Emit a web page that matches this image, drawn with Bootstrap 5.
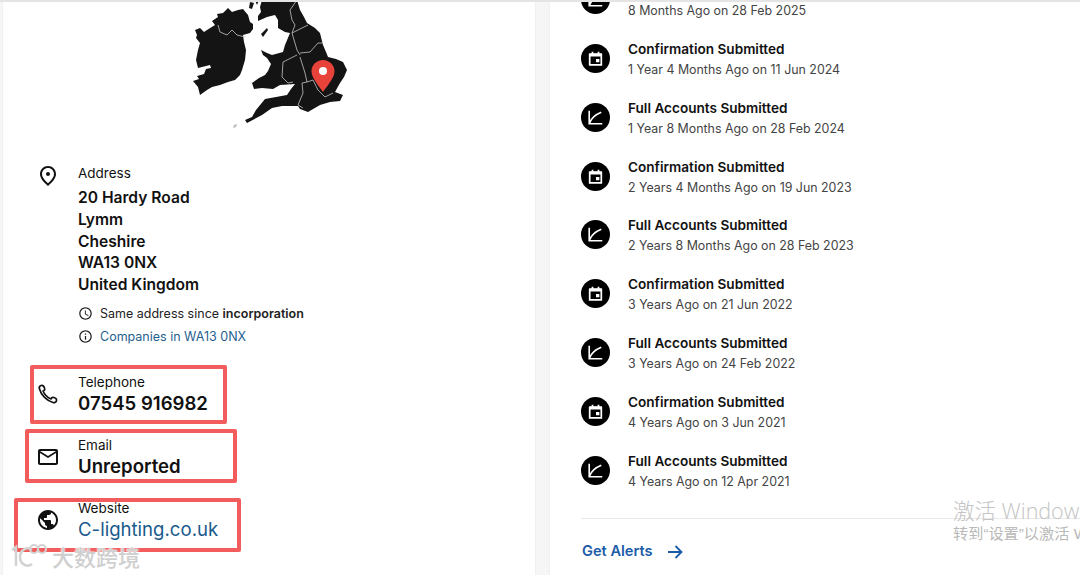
<!DOCTYPE html>
<html lang="en">
<head>
  <meta charset="UTF-8" />
  <meta name="viewport" content="width=device-width, initial-scale=1.0"/>
  <title>Company profile</title>
  <link href="https://cdn.jsdelivr.net/npm/bootstrap@5.3.3/dist/css/bootstrap.min.css" rel="stylesheet">
  <style>
    html, body { height: 575px; overflow: hidden; }
    body {
      background: #f6f6f6;
      font-family: Inter, "Noto Sans CJK SC", sans-serif;
      color: #111;
    }
    .top-shade { height: 2px; background: #e4e4e4; position: relative; z-index: 2; margin-bottom: -2px; }
    .page-wrap { padding-left: 3px; gap: 15px; height: 575px; }
    .pane { background: #fff; overflow: hidden; height: 575px; box-shadow: 0 0 2px rgba(0,0,0,.08); }
    .pane-left { width: 532px; flex: none; position: relative; }
    .pane-right { flex: 1; padding-left: 31px; }

    .uk-map { display: block; width: 180px; height: 135px; margin-left: 177px; filter: blur(.35px); }
    .info-block { padding-left: 33px; }
    .info-row { gap: 18px; }
    .info-icon { width: 24px; height: 24px; flex: none; fill: #111; }
    .info-label { font-size: 13.5px; line-height: 18px; }
    .addr-label { margin-bottom: 5px; }
    .info-value { font-size: 15.6px; font-weight: 600; line-height: 21.8px; }
    .info-big { font-size: 18.6px; font-weight: 600; line-height: 25px; }
    .info-link { font-size: 18.6px; font-weight: 400; line-height: 25px; color: #1a5a8c; text-decoration: none; }
    .info-note { font-size: 12.5px; line-height: 16px; color: #222; gap: 7px; }
    .info-note a { color: #1f5f8f; text-decoration: none; }
    .note-first { margin-top: 10px; }
    .note-second { margin-top: 7px; }
    .note-icon { width: 15px; height: 15px; fill: #222; flex: none; }
    .row-tel { margin-top: 28px; }
    .row-next { margin-top: 20px; }

    .red-box { position: absolute; border: 4px solid #f25c5c; border-radius: 2px; }
    .box-tel { left: 27px; top: 365px; width: 197px; height: 59px; }
    .box-mail { left: 22px; top: 429px; width: 212px; height: 54px; }
    .box-web { left: 11px; top: 498px; width: 227px; height: 54px; }

    .filing-list { margin-top: -28.7px; }
    .filing-row { height: 58.8px; gap: 18px; }
    .filing-dot { width: 29px; height: 29px; border-radius: 50%; background: #000; flex: none; margin-top: -2px; }
    .filing-title { font-size: 13.6px; font-weight: 600; line-height: 20px; }
    .filing-date { font-size: 12.4px; line-height: 20px; color: #444; padding-top: 1px; }
    .filing-rule { margin: 18px 0 19px; border-top: 1px solid #e9e9e9; }
    .alert-link { color: #1a5ca8; font-size: 14.6px; font-weight: 600; text-decoration: none; gap: 13px; margin-left: 1px; }

    .win-mark { position: absolute; left: 953px; top: 497px; color: #c4c4c4; white-space: nowrap; font-family: "Open Sans", "Noto Sans CJK SC", sans-serif; }
    .win-line1 { font-size: 21.5px; line-height: 27px; font-weight: 300; }
    .win-line2 { font-size: 15.2px; line-height: 20px; color: #b9b9b9; font-family: "Liberation Sans", "Noto Sans CJK SC", sans-serif; }
    .site-mark { position: absolute; left: 9px; top: 541px; gap: 3px; }
    .site-mark span { font-family: "Noto Sans CJK SC", sans-serif; font-size: 22px; font-weight: 500; color: #cfcfcf; line-height: 30px;
      text-shadow: 0 0 2px #fff, 0 0 2px #fff; }
  </style>
</head>
<body>
  <svg width="0" height="0" class="position-absolute">
    <symbol id="i-place" viewBox="0 0 24 24"><path d="M12 12c-1.100 0-2-.9-2-2s.9-2 2-2 2 .9 2 2-.9 2-2 2zm6-1.800C18 6.570 15.350 4 12 4s-6 2.570-6 6.200c0 2.340 1.950 5.440 6 9.140 4.050-3.700 6-6.800 6-9.140zM12 2c4.200 0 8 3.220 8 8.200 0 3.320-2.670 7.250-8 11.800-5.330-4.550-8-8.480-8-11.800C4 5.220 7.800 2 12 2z"/></symbol>
    <symbol id="i-clock" viewBox="0 0 24 24"><path d="M11.990 2C6.470 2 2 6.480 2 12s4.470 10 9.990 10C17.520 22 22 17.520 22 12S17.520 2 11.990 2zM12 20c-4.420 0-8-3.580-8-8s3.580-8 8-8 8 3.580 8 8-3.580 8-8 8zm.5-13H11v6l5.250 3.150.75-1.230-4.500-2.670z"/></symbol>
    <symbol id="i-info" viewBox="0 0 24 24"><path d="M11 7h2v2h-2zm0 4h2v6h-2zm1-9C6.480 2 2 6.480 2 12s4.480 10 10 10 10-4.480 10-10S17.520 2 12 2zm0 18c-4.410 0-8-3.590-8-8s3.590-8 8-8 8 3.590 8 8-3.590 8-8 8z"/></symbol>
    <symbol id="i-phone" viewBox="0 0 24 24"><path fill="none" stroke="#111" stroke-width="1.700" stroke-linejoin="round" d="M5 3.500C3.500 4 3 5.500 3.500 7 5 13 11 19 17 20.500c1.500.5 3.500-.5 3.500-2 .3-1.500-1-2.500-2.500-3-1.500-.5-2.500 0-3 1.500C11.500 15.500 8.500 12.500 7 9c1.500-.5 2-1.500 1.500-3C8 4.500 6.800 3 5 3.500z"/></symbol>
    <symbol id="i-mail" viewBox="0 0 24 24"><path d="M22 6c0-1.100-.9-2-2-2H4c-1.100 0-2 .9-2 2v12c0 1.100.9 2 2 2h16c1.100 0 2-.9 2-2V6zm-2 0l-8 5-8-5h16zm0 12H4V8l8 5 8-5v10z"/></symbol>
    <symbol id="i-globe" viewBox="0 0 24 24"><path d="M12 2C6.480 2 2 6.480 2 12s4.480 10 10 10 10-4.480 10-10S17.520 2 12 2zm-1 17.930c-3.950-.49-7-3.850-7-7.930 0-.62.08-1.210.21-1.790L9 15v1c0 1.100.9 2 2 2v1.930zm6.900-2.540c-.26-.81-1-1.390-1.900-1.390h-1v-3c0-.55-.45-1-1-1H8v-2h2c.55 0 1-.45 1-1V7h2c1.100 0 2-.9 2-2v-.41c2.930 1.190 5 4.060 5 7.410 0 2.080-.8 3.970-2.100 5.390z"/></symbol>
    <symbol id="i-cal" viewBox="0 0 30 30"><path fill="none" stroke="#fff" stroke-width="1.800" d="M9 11h12v10.500H9z"/><path fill="#fff" d="M8.500 9.500h13V13h-13zM11 8h1.800v2H11zM17.200 8H19v2h-1.800zM15.500 15.500H19V19h-3.500z"/></symbol>
    <symbol id="i-chart" viewBox="0 0 30 30"><path fill="none" stroke="#fff" stroke-width="1.700" d="M8.500 8v13.500H22M9 20.500c1.500-4.500 4.500-8 12-11"/></symbol>
  </svg>

  <div class="top-shade"></div>

  <div class="d-flex page-wrap">
    <!-- Left card -->
    <div class="pane pane-left">
      <svg class="uk-map" viewBox="180 0 180 135">
        <g fill="#141414">
          <!-- Ireland -->
          <path d="M195 30L200 28L204 32L207 30L215 25L212 21L218 17L217 14L223 13L228 8L232 12L238 10L243 9L248 15L250 22L253 24L253 29L250 33L243 35L244 42L246 50L245 60L242 70L240 75L235 80L228 82L220 85L212 87L207 90L200 95L198 87L193 81L199 79L197 76L204 74L206 69L211 68L210 65L198 68L196 60L198 50L200 43L196 38L197 35Z"/>
          <!-- Great Britain -->
          <path d="M262 0L297 0L300 10L304 17L307 23L315 28L320 33L323 45L326 52L328 57L336 59L343 62L347 70L344 77L340 83L335 92L343 95L340 101L330 102L320 105L308 112L300 109L298 106L282 106L272 108L262 115L247 123L245 120L252 117L256 110L265 99L276 97L287 95L291 89L295 84L280 85L273 89L262 88L254 89L252 83L259 78L265 75L268 71L271 64L267 58L263 55L261 50L267 53L272 55L283 52L285 45L290 33L285 32L278 28L278 20L275 15L267 17L258 21L258 16L261 12L260 7Z"/>
          <!-- islands -->
          <path d="M261 34L267 28L268 30L263 37ZM250 2L254 3L252 9L249 8ZM255 0L259 0L257 5Z"/>
        </g>
        <path fill="#bbb" d="M234 125l3-1-1 3-3 1z"/>
        <g fill="none" stroke="#c4c4c4" stroke-width=".8">
          <path d="M218 25L220 32L227 35L232 30L237 35L245 37"/>
          <path d="M297 0L290 10L292 20L295 25L292 33L297 50L300 55"/>
          <path d="M292 33L308 25"/>
          <path d="M300 53L310 52L318 43L323 43"/>
          <path d="M297 55L283 62L282 77L288 83L293 82"/>
          <path d="M300 57L305 73L307 82L313 80"/>
          <path d="M307 82L302 83L303 93L298 105L303 108"/>
          <path d="M313 80L318 90L325 97L333 93"/>
        </g>
        <path fill="#e8433a" d="M323 60c6.300 0 11.500 5 11.500 11.200 0 6.500-6.500 13.500-11.500 20.800-5-7.300-11.500-14.300-11.500-20.800C311.500 65 316.700 60 323 60z"/>
        <circle cx="323" cy="71" r="4" fill="#fff"/>
      </svg>

      <div class="info-block">
        <div class="d-flex info-row" style="margin-top:29px">
          <svg class="info-icon"><use href="#i-place"/></svg>
          <div>
            <div class="info-label addr-label">Address</div>
            <div class="info-value">20 Hardy Road</div>
            <div class="info-value">Lymm</div>
            <div class="info-value">Cheshire</div>
            <div class="info-value">WA13 0NX</div>
            <div class="info-value">United Kingdom</div>
            <div class="d-flex align-items-center info-note note-first"><svg class="note-icon"><use href="#i-clock"/></svg><span>Same address since <b class="fw-semibold">incorporation</b></span></div>
            <div class="d-flex align-items-center info-note note-second"><svg class="note-icon"><use href="#i-info"/></svg><a href="#">Companies in WA13 0NX</a></div>
          </div>
        </div>

        <div class="d-flex info-row align-items-center row-tel">
          <svg class="info-icon"><use href="#i-phone"/></svg>
          <div><div class="info-label">Telephone</div><div class="info-big">07545 916982</div></div>
        </div>
        <div class="d-flex info-row align-items-center row-next">
          <svg class="info-icon"><use href="#i-mail"/></svg>
          <div><div class="info-label">Email</div><div class="info-big">Unreported</div></div>
        </div>
        <div class="d-flex info-row align-items-center row-next">
          <svg class="info-icon"><use href="#i-globe"/></svg>
          <div><div class="info-label">Website</div><a href="#" class="info-link">C-lighting.co.uk</a></div>
        </div>
      </div>

      <div class="red-box box-tel"></div>
      <div class="red-box box-mail"></div>
      <div class="red-box box-web"></div>
    </div>

    <!-- Right card -->
    <div class="pane pane-right">
      <div class="filing-list">
        <div class="d-flex align-items-center filing-row"><svg class="filing-dot"><use href="#i-chart"/></svg><div><div class="filing-title">Full Accounts Submitted</div><div class="filing-date">8 Months Ago on 28 Feb 2025</div></div></div>
        <div class="d-flex align-items-center filing-row"><svg class="filing-dot"><use href="#i-cal"/></svg><div><div class="filing-title">Confirmation Submitted</div><div class="filing-date">1 Year 4 Months Ago on 11 Jun 2024</div></div></div>
        <div class="d-flex align-items-center filing-row"><svg class="filing-dot"><use href="#i-chart"/></svg><div><div class="filing-title">Full Accounts Submitted</div><div class="filing-date">1 Year 8 Months Ago on 28 Feb 2024</div></div></div>
        <div class="d-flex align-items-center filing-row"><svg class="filing-dot"><use href="#i-cal"/></svg><div><div class="filing-title">Confirmation Submitted</div><div class="filing-date">2 Years 4 Months Ago on 19 Jun 2023</div></div></div>
        <div class="d-flex align-items-center filing-row"><svg class="filing-dot"><use href="#i-chart"/></svg><div><div class="filing-title">Full Accounts Submitted</div><div class="filing-date">2 Years 8 Months Ago on 28 Feb 2023</div></div></div>
        <div class="d-flex align-items-center filing-row"><svg class="filing-dot"><use href="#i-cal"/></svg><div><div class="filing-title">Confirmation Submitted</div><div class="filing-date">3 Years Ago on 21 Jun 2022</div></div></div>
        <div class="d-flex align-items-center filing-row"><svg class="filing-dot"><use href="#i-chart"/></svg><div><div class="filing-title">Full Accounts Submitted</div><div class="filing-date">3 Years Ago on 24 Feb 2022</div></div></div>
        <div class="d-flex align-items-center filing-row"><svg class="filing-dot"><use href="#i-cal"/></svg><div><div class="filing-title">Confirmation Submitted</div><div class="filing-date">4 Years Ago on 3 Jun 2021</div></div></div>
        <div class="d-flex align-items-center filing-row"><svg class="filing-dot"><use href="#i-chart"/></svg><div><div class="filing-title">Full Accounts Submitted</div><div class="filing-date">4 Years Ago on 12 Apr 2021</div></div></div>
      </div>
      <div class="filing-rule"></div>
      <a href="#" class="d-inline-flex align-items-center alert-link">Get Alerts
        <svg width="18" height="18" viewBox="0 0 18 18" fill="none" stroke="#1a5ca8" stroke-width="1.800"><path d="M2 9h13.500M9.500 3l6 6-6 6"/></svg>
      </a>
    </div>
  </div>

  <div class="win-mark">
    <div class="win-line1">激活 Windows</div>
    <div class="win-line2">转到“设置”以激活 Windows。</div>
  </div>
  <div class="site-mark d-flex align-items-center">
    <svg width="40" height="28" viewBox="0 0 40 28" fill="none" stroke="#d2d2d2" stroke-width="2.500"><path d="M3 8l4-3v19M23 8c-5-4-12 0-12 7s7 11 12 7"/><circle cx="25" cy="7" r="4" stroke-width="2"/><circle cx="33" cy="7" r="4" stroke-width="2"/></svg>
    <span>大数跨境</span>
  </div>

  <script src="https://cdn.jsdelivr.net/npm/bootstrap@5.3.3/dist/js/bootstrap.bundle.min.js"></script>
</body>
</html>
